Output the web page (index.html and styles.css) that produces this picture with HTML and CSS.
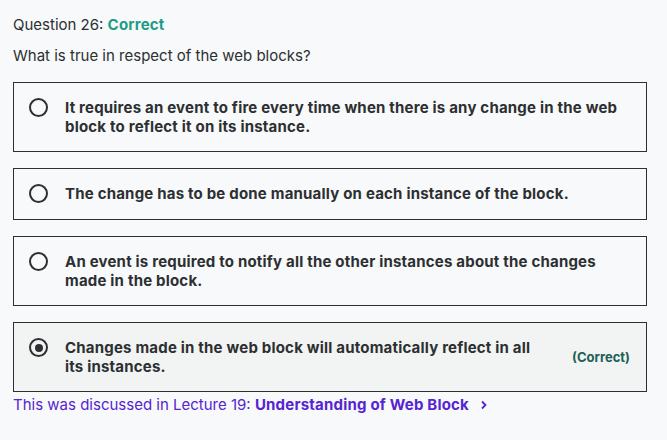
FILE: index.html
```html
<!DOCTYPE html>
<html lang="en">
<head>
<meta charset="utf-8">
<title>Question 26</title>
<link rel="stylesheet" href="styles.css">
</head>
<body>
<div class="quiz">
  <div class="q-head">Question 26: <span class="q-status">Correct</span></div>
  <div class="q-prompt">What is true in respect of the web blocks?</div>
  <ul class="answers">
    <li class="answer">
      <span class="radio"></span>
      <span class="answer-text">It requires an event to fire every time when there is any change in the web block to reflect it on its instance.</span>
    </li>
    <li class="answer">
      <span class="radio"></span>
      <span class="answer-text">The change has to be done manually on each instance of the block.</span>
    </li>
    <li class="answer">
      <span class="radio"></span>
      <span class="answer-text">An event is required to notify all the other instances about the changes made in the block.</span>
    </li>
    <li class="answer answer-correct">
      <span class="radio radio-checked"></span>
      <span class="answer-text answer-text-narrow">Changes made in the web block will automatically reflect in all its instances.</span>
      <span class="answer-flag">(Correct)</span>
    </li>
  </ul>
  <a class="related" href="#">This was discussed in Lecture 19: <strong>Understanding of Web Block</strong>
    <svg class="chev" width="10" height="10" viewBox="0 0 10 10" aria-hidden="true"><path d="M3 1.5 L6.5 5 L3 8.5" fill="none" stroke="currentColor" stroke-width="1.8"/></svg>
  </a>
</div>
</body>
</html>
```

FILE: styles.css
```css
html, body {
  margin: 0;
  padding: 0;
  background: #f7f9fa;
}
body {
  font-family: Inter, "Liberation Sans", sans-serif;
  color: #2d2f31;
}
.quiz {
  padding: 15px 20px 0 13px;
}
.q-head {
  font-size: 15px;
  line-height: 20px;
}
.q-status {
  color: #1e9d85;
  font-weight: 700;
  letter-spacing: 0.2px;
}
.q-prompt {
  font-size: 15px;
  line-height: 20px;
  margin-top: 11px;
}
.answers {
  list-style: none;
  margin: 16px 0 0;
  padding: 0;
  display: flex;
  flex-direction: column;
  gap: 16px;
}
.answer {
  display: flex;
  align-items: flex-start;
  border: 1px solid #2d2f31;
  padding: 15px 16px 15px 15px;
  background: #f7f9fa;
}
.answer-correct {
  background: #f1f4f3;
  align-items: center;
}
.radio {
  flex: none;
  box-sizing: border-box;
  width: 19px;
  height: 19px;
  border: 2px solid #2d2f31;
  border-radius: 50%;
  margin: 0 17px 0 0;
  position: relative;
  align-self: flex-start;
}
.radio-checked::after {
  content: "";
  position: absolute;
  left: 3.5px;
  top: 3.5px;
  width: 8px;
  height: 8px;
  border-radius: 50%;
  background: #2d2f31;
}
.answer-text {
  font-weight: 700;
  font-size: 15px;
  line-height: 19px;
  min-height: 20px;
  letter-spacing: 0.2px;
  color: #2d2f31;
  flex: 1;
}
.answer-text-narrow {
  padding-right: 30px;
}
.answer-flag {
  flex: none;
  font-weight: 700;
  font-size: 13px;
  color: #1e6055;
}
.related {
  display: inline-flex;
  align-items: center;
  margin-top: 3px;
  font-size: 15px;
  line-height: 19px;
  color: #5624d0;
  text-decoration: none;
  white-space: pre;
}
.related strong {
  font-weight: 700;
  letter-spacing: 0.2px;
}
.chev {
  margin-left: 10px;
}
```
